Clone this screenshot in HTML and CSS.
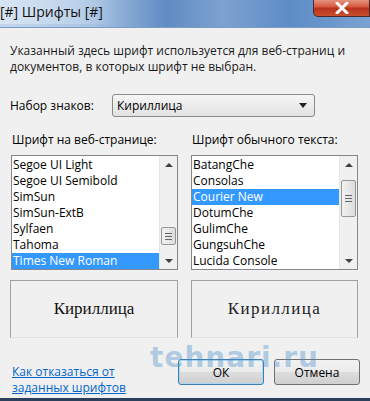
FILE: index.html
```html
<!DOCTYPE html>
<html lang="ru">
<head>
  <meta charset="UTF-8" />
  <title>Шрифты</title>
  <link rel="stylesheet" href="styles.css">
</head>
<body>

<div class="window">
  <header class="titlebar">
    <span class="title">[#] Шрифты [#]</span>
    <button class="close-btn" aria-label="Закрыть">
      <svg width="14" height="12" viewBox="0 0 14 12">
        <path d="M2 1 L12 11 M12 1 L2 11" stroke="#fff" stroke-width="3" stroke-linecap="round"/>
      </svg>
    </button>
  </header>

  <main class="content">
    <p class="desc">Указанный здесь шрифт используется для веб-страниц и документов, в которых шрифт не выбран.</p>

    <div class="charset">
      <label>Набор знаков:</label>
      <div class="combo">
        <span>Кириллица</span>
        <span class="combo-arrow"></span>
      </div>
    </div>

    <div class="columns">
      <section class="col">
        <div class="col-label">Шрифт на веб-странице:</div>
        <div class="listbox">
          <ul class="items">
            <li>Segoe UI Light</li>
            <li>Segoe UI Semibold</li>
            <li>SimSun</li>
            <li>SimSun-ExtB</li>
            <li>Sylfaen</li>
            <li>Tahoma</li>
            <li class="selected">Times New Roman</li>
          </ul>
          <div class="scrollbar">
            <span class="arrow up"></span>
            <div class="track">
              <div class="thumb" style="margin-top: 54px"><i></i><i></i><i></i></div>
            </div>
            <span class="arrow down"></span>
          </div>
        </div>
        <div class="preview serif">Кириллица</div>
      </section>

      <section class="col">
        <div class="col-label">Шрифт обычного текста:</div>
        <div class="listbox">
          <ul class="items">
            <li>BatangChe</li>
            <li>Consolas</li>
            <li class="selected">Courier New</li>
            <li>DotumChe</li>
            <li>GulimChe</li>
            <li>GungsuhChe</li>
            <li>Lucida Console</li>
          </ul>
          <div class="scrollbar">
            <span class="arrow up"></span>
            <div class="track">
              <div class="thumb tall" style="margin-top: 7px"><i></i><i></i><i></i></div>
            </div>
            <span class="arrow down"></span>
          </div>
        </div>
        <div class="preview courier">Кириллица</div>
      </section>
    </div>

    <footer class="footer">
      <a href="#" class="help-link">Как отказаться от<br>заданных шрифтов</a>
      <div class="buttons">
        <button class="btn default">ОК</button>
        <button class="btn">Отмена</button>
      </div>
      <span class="watermark">tehnari.ru</span>
    </footer>
  </main>

  <div class="taskbar-edge"></div>
</div>

</body>
</html>
```

FILE: styles.css
```css
body {
  margin: 0;
  padding: 0;
  background: #f0f0f0;
  font-family: 'Open Sans', 'Noto Sans', sans-serif;
  font-size: 12px;
  color: #000;
}

.window {
  width: 370px;
  height: 401px;
  display: flex;
  flex-direction: column;
  overflow: hidden;
}

/* TITLE BAR */
.titlebar {
  height: 28px;
  display: flex;
  align-items: flex-start;
  justify-content: space-between;
  background: linear-gradient(to right, #c4d6ec 0%, #a9c3e3 25%, #5f8bc3 45%, #7ea2d0 60%, #5d8cc6 78%, #7aa1d2 100%);
  border-bottom: 1px solid #7d9cc4;
  box-sizing: border-box;
}

.title {
  font-size: 14px;
  line-height: 24px;
  color: #111;
  background: linear-gradient(to right, rgba(220,232,245,0.8), rgba(220,232,245,0));
  padding-right: 14px;
}

.close-btn {
  width: 57px;
  height: 18px;
  margin-top: -1px;
  border: 1px solid #4a2a2a;
  border-top: none;
  border-radius: 0 0 0 5px;
  background: linear-gradient(to bottom, #e79a8a 0%, #d5593f 45%, #b8321d 55%, #c9502f 100%);
  display: flex;
  align-items: center;
  justify-content: center;
  padding: 0;
}

/* CONTENT */
.content {
  flex: 1;
  padding: 0 10px;
  position: relative;
}

.desc {
  margin: 15px 0 0;
  line-height: 16px;
  color: #1a1a1a;
}

.charset {
  display: flex;
  align-items: center;
  margin-top: 19px;
  height: 23px;
}

.charset label {
  width: 102px;
}

.combo {
  width: 203px;
  height: 23px;
  box-sizing: border-box;
  border: 1px solid #8a8a8a;
  border-radius: 3px;
  background: linear-gradient(to bottom, #f6f6f6, #e2e2e2);
  display: flex;
  align-items: center;
  justify-content: space-between;
  padding: 0 7px 0 4px;
}

.combo-arrow {
  width: 0;
  height: 0;
  border-left: 4px solid transparent;
  border-right: 4px solid transparent;
  border-top: 5px solid #222;
}

/* LISTS */
.columns {
  display: flex;
  gap: 13px;
  margin-top: 15px;
}

.col {
  width: 167px;
  display: flex;
  flex-direction: column;
}

.col:first-child {
  margin-left: 1px;
}

.col-label {
  line-height: 16px;
  padding-left: 1px;
}

.listbox {
  margin-top: 7px;
  height: 115px;
  box-sizing: border-box;
  border: 1px solid #828790;
  background: #fff;
  display: flex;
}

.items {
  list-style: none;
  margin: 0;
  padding: 1px 0 0 0;
  flex: 1;
}

.items li {
  height: 16px;
  line-height: 16px;
  padding-left: 1px;
  white-space: nowrap;
}

.items li.selected {
  background: #3399ff;
  color: #fff;
}

.scrollbar {
  width: 17px;
  background: #f0f0f0;
  border-left: 1px solid #e6e6e6;
  display: flex;
  flex-direction: column;
  align-items: center;
}

.arrow {
  height: 17px;
  width: 17px;
  display: flex;
  align-items: center;
  justify-content: center;
}

.arrow::before {
  content: "";
  border-left: 4px solid transparent;
  border-right: 4px solid transparent;
}

.arrow.up::before {
  border-bottom: 4px solid #404040;
}

.arrow.down::before {
  border-top: 4px solid #404040;
}

.track {
  flex: 1;
  width: 17px;
}

.thumb {
  width: 15px;
  height: 18px;
  margin-left: 1px;
  box-sizing: border-box;
  border: 1px solid #979797;
  border-radius: 2px;
  background: linear-gradient(to right, #f2f2f2, #dcdcdc);
  display: flex;
  flex-direction: column;
  align-items: center;
  justify-content: center;
  gap: 2px;
}

.thumb.tall {
  height: 37px;
}

.thumb i {
  display: block;
  width: 7px;
  height: 1px;
  background: #666;
}

/* PREVIEWS */
.preview {
  margin-top: 10px;
  height: 58px;
  box-sizing: border-box;
  border: 1px solid #a0a0a0;
  border-bottom-color: #e0e0e0;
  display: flex;
  align-items: center;
  justify-content: center;
  color: #111;
}

.col:first-child .preview {
  margin-left: -1px;
}

.serif {
  font-family: 'Liberation Serif', serif;
  font-size: 17px;
}

.courier {
  font-family: 'Liberation Serif', serif;
  font-size: 17px;
  letter-spacing: 1.4px;
  color: #222;
}

/* FOOTER */
.footer {
  display: flex;
  align-items: flex-start;
  justify-content: space-between;
  margin-top: 21px;
  position: relative;
}

.help-link {
  color: #0066cc;
  line-height: 16px;
  margin-top: 5px;
  margin-left: 2px;
}

.buttons {
  display: flex;
  gap: 10px;
}

.btn {
  width: 86px;
  height: 26px;
  font-family: 'Open Sans', 'Noto Sans', sans-serif;
  font-size: 12px;
  border: 1px solid #707070;
  border-radius: 3px;
  background: linear-gradient(to bottom, #f2f2f2 0%, #ebebeb 50%, #dddddd 51%, #cfcfcf 100%);
  color: #000;
}

.btn.default {
  border-color: #3c7fb1;
  box-shadow: inset 0 0 0 1px #a8d8f0;
}

.watermark {
  position: absolute;
  left: 140px;
  top: -18px;
  font-family: 'DejaVu Sans', sans-serif;
  font-weight: bold;
  font-size: 28px;
  letter-spacing: 1px;
  color: rgba(70, 140, 200, 0.4);
  pointer-events: none;
}

.taskbar-edge {
  height: 3px;
  background: #2b3f5a;
}
```
